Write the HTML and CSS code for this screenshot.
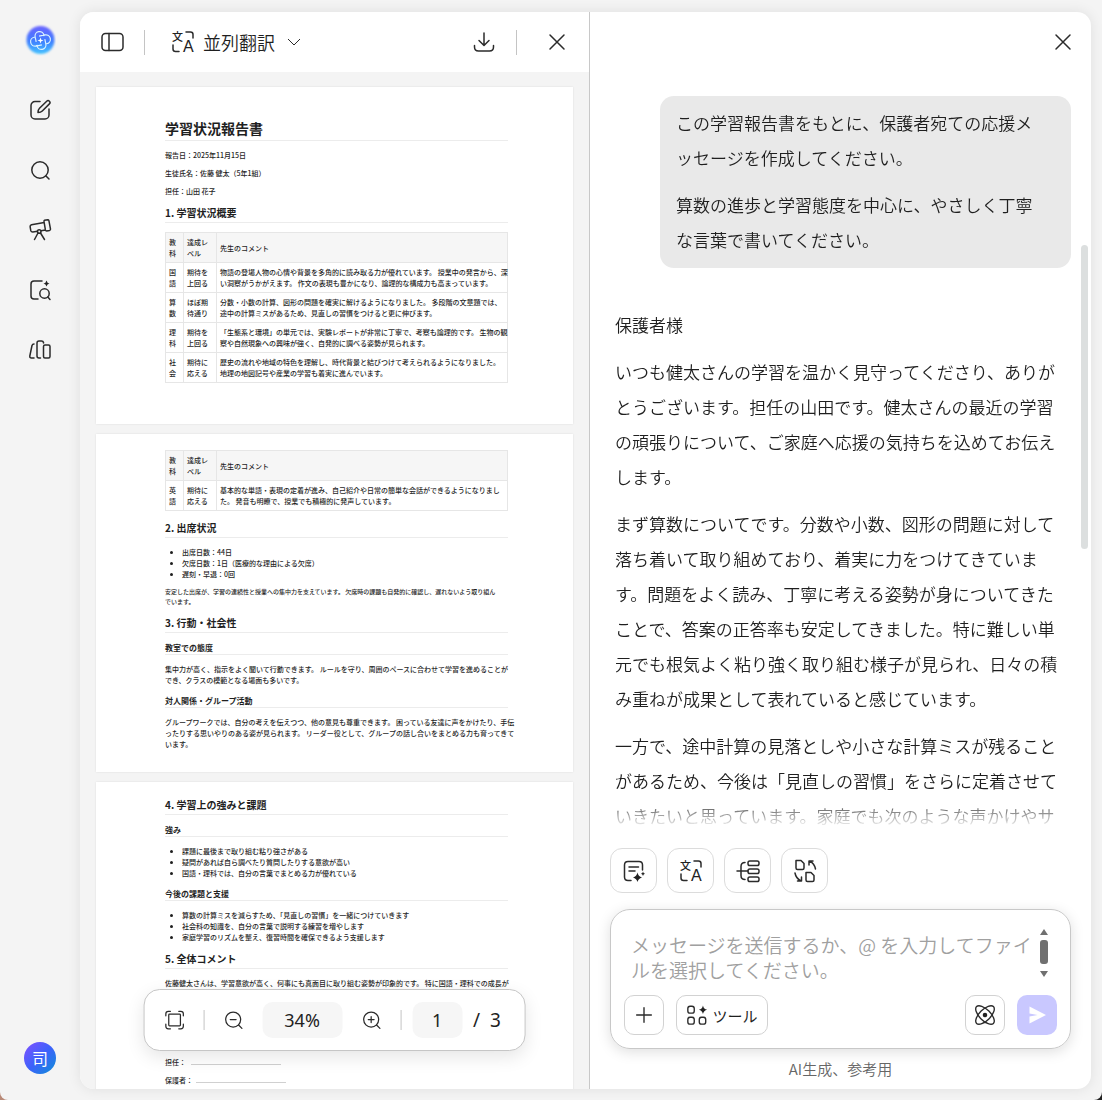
FILE: index.html
```html
<!DOCTYPE html>
<html lang="ja">
<head>
  <meta charset="UTF-8" />
  <meta name="viewport" content="width=device-width, initial-scale=1.0" />
  <title>並列翻訳</title>
  <link rel="stylesheet" href="styles.css">
</head>
<body>
<div class="app">

  <nav class="sidebar">
    <a href="#" class="logo" aria-label="ホーム">
      <svg width="32" height="32" viewBox="0 0 32 32">
        <defs>
          <linearGradient id="lg" x1="0" y1="0" x2="0" y2="1"><stop offset="0" stop-color="#6a62ff"/><stop offset=".55" stop-color="#3f80ff"/><stop offset="1" stop-color="#46c4ff"/></linearGradient>
          <filter id="soft"><feGaussianBlur stdDeviation="1"/></filter>
        </defs>
        <circle cx="16.500" cy="16" r="14" fill="url(#lg)" filter="url(#soft)"/>
        <g fill="none" stroke="#d9f2ff" stroke-width="1.2">
          <path d="M12 17v-5a4.500 4.500 0 0 1 9 0v1M21 16v5a4.500 4.500 0 0 1-9 0v-1M16 12h6a4.500 4.500 0 0 1 0 9h-1M17 21h-6a4.500 4.500 0 0 1 0-9h1" transform="rotate(-12 16.500 16.500)"/>
        </g>
        <path d="M16.500 13.500l.8 2.200 2.200.8-2.200.8-.8 2.200-.8-2.200-2.200-.8 2.200-.8z" fill="#fff"/>
      </svg>
    </a>
    <a href="#" aria-label="新規作成"><svg class="icon" viewBox="0 0 24 24"><path d="M12 3.500H7a4 4 0 0 0-4 4V17a4 4 0 0 0 4 4h10a4 4 0 0 0 4-4v-6"/><path d="M10 14.500c0-2 .3-3 1.500-4.200l7.200-7.100a1.900 1.900 0 0 1 2.700 2.700l-7.100 7.100c-1.200 1.200-2.300 1.500-4.300 1.500z"/></svg></a>
    <a href="#" aria-label="検索"><svg class="icon" viewBox="0 0 24 24"><circle cx="12" cy="12" r="8.200"/><path d="M18 18l3 3"/></svg></a>
    <a href="#" aria-label="探索"><svg class="icon" viewBox="0 0 24 24"><path d="M16.500 2.300l3.200-.6q1 0 1.200.9l1.600 8.500q.1 1-.9 1.300l-3 .5q-1 0-1.200-1L16 3.500q-.1-1 .5-1.200zM16.200 4.500L3.500 6.700q-1.500.4-1.400 2l.7 4q.5 1.300 2 1.200l4.700-.6M13 12.800l4.500-.7"/><circle cx="11.200" cy="13.500" r="1.800"/><path d="M10 15l-3.500 6.500M12.500 15l4 6.500"/></svg></a>
    <a href="#" aria-label="ファイル検索"><svg class="icon" viewBox="0 0 24 24"><path d="M14 3H6Q3 3 3 6v12q0 3 3 3h4"/><circle cx="16.500" cy="15.500" r="4.700"/><path d="M19.800 19l2.200 2.500"/><path class="fill" d="M18.500 2.500q.5 2.500 3 3-2.500.5-3 3-.5-2.500-3-3 2.500-.5 3-3z"/></svg></a>
    <a href="#" aria-label="ライブラリ"><svg class="icon" viewBox="0 0 24 24"><rect x="15.500" y="7" width="6.500" height="13" rx="1.500"/><path d="M15.500 5V4.500q-.3-1.500-2-1.500h-2.500q-2 0-2 2v13q0 2 2 2h1.500M6 6q-1.500 0-2 1.500L1.800 18q-.2 2 1.700 2h2.500"/></svg></a>
    <button class="avatar">司</button>
  </nav>

  <main class="window">

    <section class="viewer">
      <header class="viewer-head">
        <button aria-label="サイドバー"><svg class="icon" viewBox="0 0 24 24"><rect x="2" y="3.500" width="21" height="17" rx="3.500"/><path d="M9 3.500v17"/></svg></button>
        <span class="line"></span>
        <label class="mode">
          <svg class="icon" viewBox="0 0 24 24"><text x="1" y="11" class="han">文</text><text x="12" y="22" class="latin">A</text><path d="M15 2h4.500Q22 2 22 4.500V8M2 15v4q0 2.500 2.500 2.500H8"/></svg>
          <select aria-label="表示モード"><option>並列翻訳</option></select>
          <svg class="chevron" viewBox="0 0 14 14"><path d="M1 4l6 6 6-6"/></svg>
        </label>
        <button class="push" aria-label="ダウンロード"><svg class="icon" viewBox="0 0 24 24"><path d="M12 3v12M7 10.500l5 5 5-5M2.500 15.500V17q0 4 4 4h11q4 0 4-4v-1.500"/></svg></button>
        <span class="line"></span>
        <button aria-label="閉じる"><svg class="icon" viewBox="0 0 24 24"><path d="M5 5l14 14M19 5L5 19"/></svg></button>
      </header>

      <div class="pages">
        <article class="page first">
          <h1>学習状況報告書</h1>
          <p>報告日：2025年11月15日</p>
          <p>生徒氏名：佐藤 健太（5年1組）</p>
          <p>担任：山田 花子</p>
          <h2>1. 学習状況概要</h2>
          <table>
            <tr><th class="subject">教<br>科</th><th class="level">達成レ<br>ベル</th><th>先生のコメント</th></tr>
            <tr><td>国<br>語</td><td>期待を<br>上回る</td><td>物語の登場人物の心情や背景を多角的に読み取る力が優れています。 授業中の発言から、深<br>い洞察がうかがえます。 作文の表現も豊かになり、論理的な構成力も高まっています。</td></tr>
            <tr><td>算<br>数</td><td>ほぼ期<br>待通り</td><td>分数・小数の計算、図形の問題を確実に解けるようになりました。 多段階の文章題では、<br>途中の計算ミスがあるため、見直しの習慣をつけると更に伸びます。</td></tr>
            <tr><td>理<br>科</td><td>期待を<br>上回る</td><td>「生態系と環境」の単元では、実験レポートが非常に丁寧で、考察も論理的です。 生物の観<br>察や自然現象への興味が強く、自発的に調べる姿勢が見られます。</td></tr>
            <tr><td>社<br>会</td><td>期待に<br>応える</td><td>歴史の流れや地域の特色を理解し、時代背景と結びつけて考えられるようになりました。<br>地理の地図記号や産業の学習も着実に進んでいます。</td></tr>
          </table>
        </article>

        <article class="page">
          <table>
            <tr><th class="subject">教<br>科</th><th class="level">達成レ<br>ベル</th><th>先生のコメント</th></tr>
            <tr><td>英<br>語</td><td>期待に<br>応える</td><td>基本的な単語・表現の定着が進み、自己紹介や日常の簡単な会話ができるようになりまし<br>た。 発音も明瞭で、授業でも積極的に発声しています。</td></tr>
          </table>
          <h2>2. 出席状況</h2>
          <ul>
            <li>出席日数：44日</li>
            <li>欠席日数：1日（医療的な理由による欠席）</li>
            <li>遅刻・早退：0回</li>
          </ul>
          <p class="small">安定した出席が、学習の連続性と授業への集中力を支えています。 欠席時の課題も自発的に確認し、遅れないよう取り組ん<br>でいます。</p>
          <h2>3. 行動・社会性</h2>
          <h3>教室での態度</h3>
          <p>集中力が高く、指示をよく聞いて行動できます。 ルールを守り、周囲のペースに合わせて学習を進めることが<br>でき、クラスの模範となる場面も多いです。</p>
          <h3>対人関係・グループ活動</h3>
          <p>グループワークでは、自分の考えを伝えつつ、他の意見も尊重できます。 困っている友達に声をかけたり、手伝<br>ったりする思いやりのある姿が見られます。 リーダー役として、グループの話し合いをまとめる力も育ってきて<br>います。</p>
        </article>

        <article class="page">
          <h2>4. 学習上の強みと課題</h2>
          <h3>強み</h3>
          <ul>
            <li>課題に最後まで取り組む粘り強さがある</li>
            <li>疑問があれば自ら調べたり質問したりする意欲が高い</li>
            <li>国語・理科では、自分の言葉でまとめる力が優れている</li>
          </ul>
          <h3>今後の課題と支援</h3>
          <ul>
            <li>算数の計算ミスを減らすため、「見直しの習慣」を一緒につけていきます</li>
            <li>社会科の知識を、自分の言葉で説明する練習を増やします</li>
            <li>家庭学習のリズムを整え、復習時間を確保できるよう支援します</li>
          </ul>
          <h2>5. 全体コメント</h2>
          <p>佐藤健太さんは、学習意欲が高く、何事にも真面目に取り組む姿勢が印象的です。 特に国語・理科での成長が</p>
          <div class="sign">
            <p>担任： <span></span></p>
            <p>保護者：<span></span></p>
          </div>
        </article>
      </div>

      <div class="zoombar">
        <button aria-label="全体表示"><svg class="icon" viewBox="0 0 24 24"><rect x="5" y="5" width="14" height="14" rx="1"/><path d="M1.500 7V4.500q0-3 3-3H7M17 1.500h2.500q3 0 3 3V7M22.500 17v2.500q0 3-3 3H17M7 22.500H4.500q-3 0-3-3V17"/></svg></button>
        <span class="line"></span>
        <button aria-label="縮小"><svg class="icon" viewBox="0 0 24 24"><circle cx="11.500" cy="11.500" r="9"/><path d="M18 18l4 4M8 11.500h7"/></svg></button>
        <input class="percent" type="text" value="34%" aria-label="倍率">
        <button aria-label="拡大"><svg class="icon" viewBox="0 0 24 24"><circle cx="11.500" cy="11.500" r="9"/><path d="M18 18l4 4M8 11.500h7M11.500 8v7"/></svg></button>
        <span class="line"></span>
        <input class="number" type="text" value="1" aria-label="ページ">
        <span class="total">/&nbsp; 3</span>
      </div>
    </section>

    <section class="chat">
      <header class="chat-head">
        <button aria-label="チャットを閉じる"><svg class="icon" viewBox="0 0 24 24"><path d="M5 5l14 14M19 5L5 19"/></svg></button>
      </header>

      <div class="messages">
        <div class="bubble">
          <p>この学習報告書をもとに、保護者宛ての応援メッセージを作成してください。</p>
          <p>算数の進歩と学習態度を中心に、やさしく丁寧な言葉で書いてください。</p>
        </div>
        <div class="answer">
          <p>保護者様</p>
          <p>いつも健太さんの学習を温かく見守ってくださり、ありがとうございます。担任の山田です。健太さんの最近の学習の頑張りについて、ご家庭へ応援の気持ちを込めてお伝えします。</p>
          <p>まず算数についてです。分数や小数、図形の問題に対して落ち着いて取り組めており、着実に力をつけてきています。問題をよく読み、丁寧に考える姿勢が身についてきたことで、答案の正答率も安定してきました。特に難しい単元でも根気よく粘り強く取り組む様子が見られ、日々の積み重ねが成果として表れていると感じています。</p>
          <p>一方で、途中計算の見落としや小さな計算ミスが残ることがあるため、今後は「見直しの習慣」をさらに定着させていきたいと思っています。家庭でも次のような声かけやサ</p>
        </div>
      </div>
      <div class="thumb"></div>

      <div class="quick">
        <button aria-label="要約"><svg class="icon" viewBox="0 0 24 24"><path d="M9 21.500H6q-3.500 0-3.500-3.500V6Q2.500 2.500 6 2.500h11q3.500 0 3.500 3.500v5M7 8h9.500M7 12h6"/><path class="fill" d="M15.500 13.500q.7 4 4.500 5-3.800 1-4.500 4.500-.8-3.500-4.500-4.500 3.700-1 4.500-5zM21 12.500q.3 2 2 2.300-1.700.5-2 2.200-.3-1.700-2-2.200 1.700-.3 2-2.300z"/></svg></button>
        <button aria-label="翻訳"><svg class="icon" viewBox="0 0 24 24"><text x="1" y="11" class="han">文</text><text x="12" y="22" class="latin">A</text><path d="M15 2h4.500Q22 2 22 4.500V8M2 15v4q0 2.500 2.500 2.500H8"/></svg></button>
        <button aria-label="マインドマップ"><svg class="icon" viewBox="0 0 24 24"><rect x="12" y="2" width="11" height="4.500" rx="1.800"/><rect x="12" y="10" width="11" height="4.500" rx="1.800"/><rect x="12" y="18" width="11" height="4.500" rx="1.800"/><path d="M1 12h11M9 3.500q-4 0-4 4v9q0 4 4 4"/></svg></button>
        <button aria-label="変換"><svg class="icon" viewBox="0 0 24 24"><path d="M3 1.500h5l3 3V9q0 1.500-1.500 1.500H4.500Q3 10.500 3 9zM13 13.500h5l3 3V21q0 1.500-1.500 1.500h-5Q13 22.500 13 21zM16 6V2h4M16.500 2q5 2.500 6 8M2 14q1 5.500 6 8M4.500 22H8.500v-4"/></svg></button>
      </div>

      <form class="composer">
        <div class="entry">
          <textarea rows="2" aria-label="メッセージ" placeholder="メッセージを送信するか、@ を入力してファイルを選択してください。"></textarea>
          <svg class="scroll" width="8" height="50" viewBox="0 0 8 50"><path d="M4 1l4 6H0zM4 49l4-6H0z"/><rect x="0" y="12" width="8" height="24" rx="3"/></svg>
        </div>
        <div class="tools">
          <button type="button" aria-label="追加"><svg class="icon" viewBox="0 0 24 24"><path d="M12 4v16M4 12h16"/></svg></button>
          <button type="button" class="wide"><svg class="icon" viewBox="0 0 24 24"><rect x="2" y="2.500" width="7" height="7.500" rx="2.500"/><rect x="2" y="14.500" width="7" height="7.500" rx="2.500"/><rect x="14.500" y="14.500" width="7" height="7.500" rx="2.500"/><path class="fill" d="M18.500 1.500q.8 4 4.500 4.800-3.700.8-4.500 4.700-.8-3.900-4.500-4.700 3.700-.8 4.500-4.800z"/></svg>ツール</button>
          <button type="button" class="push" aria-label="深い思考"><svg class="icon" viewBox="0 0 24 24"><ellipse cx="12" cy="12" rx="13" ry="6" transform="rotate(45 12 12)"/><ellipse cx="12" cy="12" rx="13" ry="6" transform="rotate(-45 12 12)"/><circle class="fill" cx="12" cy="12" r="2.500"/></svg></button>
          <button type="submit" class="send" aria-label="送信"><svg width="20" height="20" viewBox="0 0 20 20"><path d="M2.500 1.500L19 10 2.500 18.500V11.500l8-1.500-8-1.500z"/></svg></button>
        </div>
      </form>
      <p class="note">AI生成、参考用</p>
    </section>

  </main>
</div>
</body>
</html>
```
FILE: styles.css
```css
*{
  margin:0;
  padding:0;
  box-sizing:border-box;
}

html{
  background:linear-gradient(to right, #b98a78, #222);
}

body{
  font-family:"Noto Sans CJK JP", sans-serif;
  color:#1f1f1f;
}

button{
  display:flex;
  align-items:center;
  justify-content:center;
  border:none;
  background:none;
  font-family:inherit;
  color:inherit;
  cursor:pointer;
}

.app{
  display:flex;
  height:100vh;
  padding:12px 11px 11px 0;
  background:#f4f4f4;
  border-radius:0 0 8px 8px;
}

/* icons */
.icon{
  display:block;
  width:24px;
  height:24px;
  overflow:visible;
  fill:none;
  stroke:#2b2b2b;
  stroke-width:1.5;
  stroke-linecap:round;
  stroke-linejoin:round;
}

.icon .fill{
  fill:#222;
  stroke:none;
}

.icon text{
  fill:#222;
  stroke:none;
}

.han{
  font-size:11px;
  font-weight:500;
}

.latin{
  font-family:"Liberation Sans", sans-serif;
  font-size:16px;
}

.push{
  margin-left:auto;
}

.line{
  width:1px;
  height:25px;
  background:#c4c4c4;
}

/* left navigation */
.sidebar{
  display:flex;
  flex-direction:column;
  align-items:center;
  gap:36px;
  width:80px;
  padding:12px 0 15px;
}

.sidebar a{
  display:block;
}

.logo{
  height:32px;
  margin-bottom:6px;
}

.avatar{
  width:32px;
  height:32px;
  margin-top:auto;
  border-radius:50%;
  background:linear-gradient(135deg, #8250ff, #3d62fb 50%, #0d8fd6);
  color:#fff;
  font-size:16px;
}

.window{
  flex:1;
  display:grid;
  grid-template-columns:510fr 501fr;
  min-width:0;
  border-radius:14px;
  overflow:hidden;
  background:#fff;
  box-shadow:0 0 14px rgba(0,0,0,0.09);
}

/* document viewer */
.viewer{
  position:relative;
  display:flex;
  flex-direction:column;
  min-width:0;
  min-height:0;
  border-right:1px solid #c8c8c8;
  background:#f4f4f4;
}

.viewer-head{
  display:flex;
  align-items:center;
  flex-shrink:0;
  gap:20px;
  height:60px;
  padding:0 20px;
  background:#fff;
}

.viewer-head .line + button{
  margin-left:8px;
}

.mode{
  display:flex;
  align-items:center;
  gap:8px;
  margin-left:6px;
}

.mode select{
  appearance:none;
  width:76px;
  height:28px;
  border:none;
  background:none;
  color:#1f1f1f;
  font-family:inherit;
  font-size:18px;
  font-weight:350;
}

.chevron{
  width:14px;
  height:14px;
  fill:none;
  stroke:#2b2b2b;
}

.pages{
  flex:1;
  min-height:0;
  padding:15px 16px 0;
  overflow:hidden;
}

.page{
  aspect-ratio:297 / 210;
  margin-bottom:10px;
  padding:16px 65px 0 69px;
  background:#fff;
  box-shadow:0 0 2px rgba(0,0,0,0.1);
  font-size:7px;
  font-weight:500;
  line-height:11px;
  white-space:nowrap;
}

.first{
  padding-top:32px;
}

.page h1,
.page h2,
.page h3{
  margin:9px 0;
  border-bottom:1px solid #ececec;
}

.page h1{
  padding-bottom:3px;
  font-size:14px;
  line-height:18px;
}

.page h2{
  padding-bottom:2px;
  font-size:10px;
  line-height:14px;
}

.page h3{
  padding-bottom:1px;
  font-size:8px;
  line-height:11px;
}

.page > :first-child{
  margin-top:0;
}

.page p,
.page ul{
  margin-bottom:7px;
}

.page .small{
  font-size:6px;
  line-height:10px;
}

.page ul{
  padding-left:17px;
}

.page table{
  width:100%;
  margin-bottom:10px;
  border-collapse:collapse;
  table-layout:fixed;
}

.page th,
.page td{
  padding:4px 0 3px 3px;
  border:1px solid #e6e6e6;
  text-align:left;
}

.page th{
  background:#f6f6f6;
  font-weight:500;
}

.subject{
  width:18px;
}

.level{
  width:33px;
}

.page .sign{
  margin-top:68px;
}

.sign span{
  display:inline-block;
  width:90px;
  margin-left:3px;
  border-bottom:1px solid #d0d0d0;
}

.zoombar{
  position:absolute;
  left:50%;
  bottom:38px;
  transform:translateX(-50%);
  display:flex;
  align-items:center;
  gap:19px;
  height:62px;
  padding:0 24px 0 20px;
  border:1px solid #c6c6c6;
  border-radius:16px;
  background:#fff;
  box-shadow:0 6px 18px rgba(0,0,0,0.1);
  font-size:19px;
}

.zoombar .icon{
  width:20px;
  height:20px;
}

.zoombar .line{
  height:20px;
}

.zoombar input{
  height:36px;
  border:none;
  border-radius:10px;
  background:#f6f6f6;
  color:#222;
  font-family:"Noto Sans", sans-serif;
  font-size:18px;
  text-align:center;
}

.zoombar .percent{
  width:80px;
}

.zoombar .number{
  width:50px;
  margin-left:-8px;
}

.total{
  margin-left:-8px;
  white-space:nowrap;
  font-family:"Noto Sans", sans-serif;
}

/* chat */
.chat{
  position:relative;
  display:flex;
  flex-direction:column;
  min-width:0;
  min-height:0;
  padding:0 20px;
}

.chat-head{
  display:flex;
  align-items:center;
  justify-content:flex-end;
  flex-shrink:0;
  height:60px;
  margin-right:-4px;
}

.messages{
  flex:1;
  min-height:0;
  padding:24px 0 0 5px;
  overflow:hidden;
  font-size:17px;
  font-weight:350;
  line-height:35px;
  -webkit-mask-image:linear-gradient(to top, transparent, #000 30px);
  mask-image:linear-gradient(to top, transparent, #000 30px);
}

.messages p + p{
  margin-top:12px;
}

.bubble{
  max-width:411px;
  margin:0 0 39px auto;
  padding:9px 24px 11px 16px;
  border-radius:14px;
  background:#e9e9e9;
}

.answer{
  padding-right:12px;
}

.thumb{
  position:absolute;
  top:233px;
  right:3px;
  width:7px;
  height:304px;
  border-radius:4px;
  background:#dcdfdf;
}

.quick{
  display:flex;
  gap:10px;
  margin:20px 0 16px;
}

.quick button{
  width:47px;
  height:45px;
  border:1px solid #dcdcdc;
  border-radius:12px;
}

.composer{
  display:flex;
  flex-direction:column;
  justify-content:space-between;
  flex-shrink:0;
  height:140px;
  padding:18px 13px 13px;
  border:1px solid #c8c8c8;
  border-radius:20px;
  box-shadow:0 3px 14px rgba(0,0,0,0.13);
}

.entry{
  display:flex;
  align-items:flex-start;
  padding:0 9px 0 7px;
}

.entry textarea{
  flex:1;
  height:58px;
  padding-top:4px;
  border:none;
  outline:none;
  resize:none;
  overflow:hidden;
  background:none;
  font-family:inherit;
  font-size:19px;
  font-weight:350;
  line-height:25px;
}

.entry textarea::placeholder{
  color:#a0a0a0;
}

.scroll{
  fill:#707070;
}

.tools{
  display:flex;
  gap:12px;
}

.tools button{
  width:40px;
  height:40px;
  border:1px solid #d2d2d2;
  border-radius:10px;
}

.tools .wide{
  width:92px;
  gap:4px;
  font-size:15px;
}

.tools .icon{
  width:22px;
  height:22px;
}

.tools .send{
  border:none;
  background:#c9c8ff;
}

.send svg{
  fill:#fff;
}

.note{
  padding:10px 0;
  color:#666;
  font-size:15px;
  font-weight:350;
  line-height:20px;
  text-align:center;
}
```
